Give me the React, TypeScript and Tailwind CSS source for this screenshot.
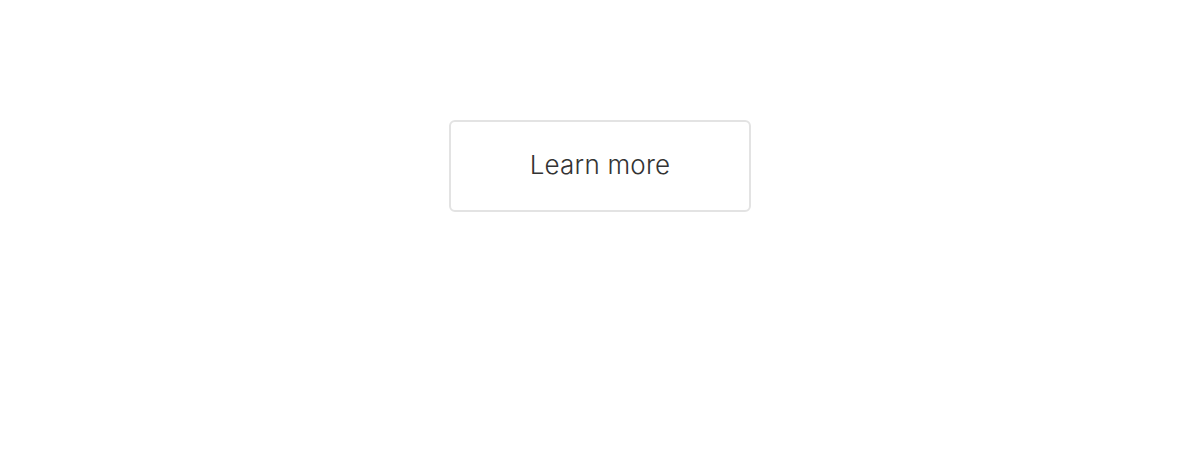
export default function App() {
  return (
    <div className="flex h-[452px] w-full justify-center bg-white pt-[120px] font-['Inter','Liberation_Sans',Arial,sans-serif]">
      <button
        type="button"
        className="flex h-[92px] w-[302px] items-center justify-center rounded-md border-2 border-[#e3e3e3] bg-white pb-[3px] text-[26px] font-light tracking-[0.2px] text-[#333333]"
      >
        Learn more
      </button>
    </div>
  );
}
